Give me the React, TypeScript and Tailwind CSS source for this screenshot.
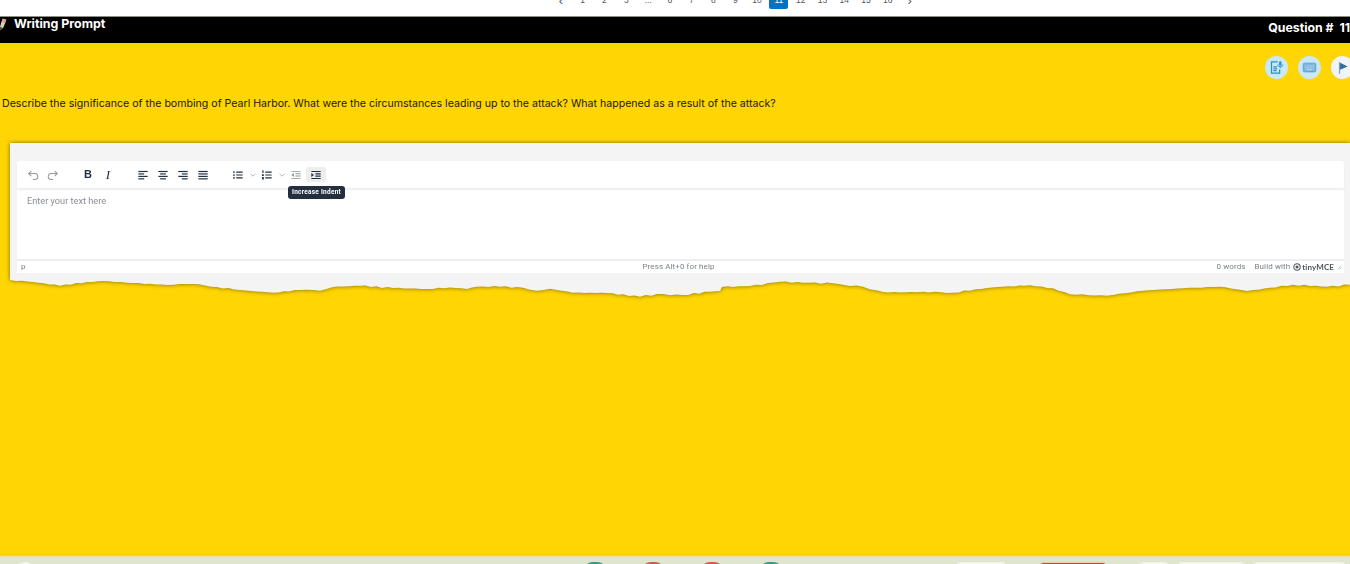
const pages = ["1", "2", "3", "...", "6", "7", "8", "9", "10", "11", "12", "13", "14", "15", "16"];

// outline of the torn paper, read off the picture in page pixels
const tornPoints: [number, number][] = [
  [10, 280], [33, 282], [60, 285.7], [87, 282], [103, 281], [133, 283], [167, 285], [193, 284], [217, 287],
  [240, 290], [273, 292.7], [300, 290], [320, 290.7], [333, 287], [360, 285.7], [393, 288], [427, 289], [450, 287.4],
  [467, 289], [477, 286.7], [500, 286.7], [523, 287.7], [537, 290.7], [550, 288.7], [573, 292.7], [607, 293],
  [640, 296.7], [657, 294], [683, 295], [710, 291.7], [720, 291], [722, 287], [750, 286], [780, 281.7], [803, 282.7],
  [833, 283.3], [850, 286], [863, 286.7], [883, 292], [900, 292.5], [923, 291.7], [953, 292.7], [987, 288], [1003, 286.7],
  [1030, 285.3], [1053, 288.3], [1070, 294.3], [1107, 295.7], [1143, 290.7], [1183, 288.3], [1220, 286.7], [1247, 291],
  [1293, 284.7], [1327, 286.7], [1350, 284.7],
];

function buildTornEdge() {
  const out: string[] = ["M0 0 L1340 0"];
  for (let i = tornPoints.length - 1; i > 0; i--) {
    const [x1, y1] = tornPoints[i];
    const [x0, y0] = tornPoints[i - 1];
    const steps = Math.max(1, Math.round((x1 - x0) / 6));
    for (let s = 0; s < steps; s++) {
      const t = s / steps;
      const x = x1 + (x0 - x1) * t;
      const y = y1 + (y0 - y1) * t;
      const noise = s === 0 ? 0 : Math.sin(x * 1.7) * 0.5 + Math.sin(x * 0.63) * 0.3;
      out.push(`L${(x - 10).toFixed(1)} ${Math.max(0, y - 280 + noise).toFixed(1)}`);
    }
  }
  out.push("L0 0 Z");
  return out.join(" ");
}

const tornEdge = buildTornEdge();

function Ico({ children, className = "" }: { children: React.ReactNode; className?: string }) {
  return (
    <svg viewBox="0 0 24 24" className={`w-[14px] h-[14px] ${className}`} fill="currentColor">
      {children}
    </svg>
  );
}

function ToolBtn({ children, active }: { children: React.ReactNode; active?: boolean }) {
  return (
    <span className={`flex items-center justify-center w-[20px] h-[15px] rounded-[2px] ${active ? "bg-[#eeeeee]" : ""}`}>
      {children}
    </span>
  );
}

function Chevron() {
  return (
    <span className="flex items-center justify-center w-[9px] h-[15px] text-[#7d858e]">
      <svg viewBox="0 0 10 6" className="w-[6px] h-[4px]" fill="none" stroke="currentColor" strokeWidth="1">
        <path d="M1 1l4 4 4-4" />
      </svg>
    </span>
  );
}

function Align({ rows }: { rows: [number, number][] }) {
  return (
    <Ico>
      {rows.map(([x, w], i) => (
        <rect key={i} x={x} y={5 + i * 4.2} width={w} height="2" />
      ))}
    </Ico>
  );
}

function Toolbar() {
  return (
    <div className="flex items-center h-[27px] pl-[6px] bg-white rounded-t-[4px] shadow-[0_2px_2px_rgba(0,0,0,0.07)] relative text-[#222f3e]">
      <ToolBtn>
        <Ico className="text-[#8f969e]">
          <path d="M8.5 4.5L3.5 9.5l5 5 1.2-1.2-2.9-2.9H15a4.3 4.3 0 0 1 0 8.6h-3v1.7h3a6 6 0 0 0 0-12H6.8l2.9-2.9z" />
        </Ico>
      </ToolBtn>
      <ToolBtn>
        <Ico className="text-[#8f969e]">
          <path d="M15.5 4.5l5 5-5 5-1.2-1.2 2.9-2.9H9a4.3 4.3 0 0 0 0 8.6h3v1.7H9a6 6 0 0 1 0-12h8.2l-2.9-2.9z" />
        </Ico>
      </ToolBtn>
      <span className="w-[15px]" />
      <ToolBtn>
        <span className="font-['Liberation_Sans',sans-serif] font-bold text-[11px] leading-none">B</span>
      </ToolBtn>
      <ToolBtn>
        <span className="font-['Liberation_Serif',serif] italic text-[13px] leading-none">I</span>
      </ToolBtn>
      <span className="w-[15px]" />
      <ToolBtn><Align rows={[[4, 16], [4, 10], [4, 16], [4, 10]]} /></ToolBtn>
      <ToolBtn><Align rows={[[4, 16], [7, 10], [4, 16], [7, 10]]} /></ToolBtn>
      <ToolBtn><Align rows={[[4, 16], [10, 10], [4, 16], [10, 10]]} /></ToolBtn>
      <ToolBtn><Align rows={[[4, 16], [4, 16], [4, 16], [4, 16]]} /></ToolBtn>
      <span className="w-[15px]" />
      <ToolBtn>
        <Ico>
          <path d="M9 6h11v2H9zM9 11h11v2H9zM9 16h11v2H9z" />
          <circle cx="5" cy="7" r="1.5" />
          <circle cx="5" cy="12" r="1.5" />
          <circle cx="5" cy="17" r="1.5" />
        </Ico>
      </ToolBtn>
      <Chevron />
      <ToolBtn>
        <Ico>
          <path d="M9 6h11v2H9zM9 11h11v2H9zM9 16h11v2H9z" />
          <path d="M4 4h2v4.5H4zM3.5 10.5h3v3h-3zM3.5 15.5h3v4h-3z" />
        </Ico>
      </ToolBtn>
      <Chevron />
      <ToolBtn>
        <Ico className="text-[#8f969e]">
          <path d="M4 5h16v1.6H4zM11 9h9v1.6h-9zM11 13h9v1.6h-9zM4 17.4h16V19H4z" />
          <path d="M8.5 8.5v7L4 12z" />
        </Ico>
      </ToolBtn>
      <ToolBtn active>
        <Ico>
          <path d="M4 5h16v2H4zM11 9h9v2h-9zM11 13h9v2h-9zM4 17h16v2H4z" />
          <path d="M4 8.5v7l4.5-3.5z" />
        </Ico>
      </ToolBtn>
      <div className="absolute left-[271px] top-[25px] h-[13px] px-[4px] flex items-center rounded-[3px] bg-[#222f3e] text-white font-['Roboto',sans-serif] font-bold text-[6.5px] tracking-[0.25px] whitespace-nowrap z-10">
        Increase Indent
      </div>
    </div>
  );
}

function StatusBar() {
  return (
    <div className="grid grid-cols-3 items-center h-[14px] mt-auto border-t-2 border-[#eeeeee] bg-white pl-[4px] pr-[2px] font-['Roboto',sans-serif] text-[8px] text-[#7c8288] tracking-[0.1px]">
      <span>p</span>
      <span className="text-center pr-[6px] whitespace-nowrap">Press Alt+0 for help</span>
      <span className="flex items-center justify-end gap-[9px] whitespace-nowrap">
        <span>0 words</span>
        <span className="flex items-center gap-[3px]">
          Build with
          <svg viewBox="0 0 12 12" className="w-[8px] h-[8px]" fill="none" stroke="#4f565c" strokeWidth="1.6">
            <circle cx="6" cy="6" r="4.8" />
            <rect x="4" y="4" width="4" height="4" fill="#4f565c" stroke="none" />
          </svg>
          <b className="-ml-[2px] font-['Lato',sans-serif] font-bold text-[#4f565c] text-[8px]">tinyMCE</b>
        </span>
        <svg viewBox="0 0 8 8" className="w-[5px] h-[5px] -ml-[6px]" stroke="#8b939c" strokeWidth="0.8">
          <path d="M7 1L1 7M7 4L4 7" />
        </svg>
      </span>
    </div>
  );
}

function RoundIcon({ children, light }: { children: React.ReactNode; light?: boolean }) {
  return (
    <span className={`flex shrink-0 items-center justify-center w-[23px] h-[23px] rounded-full ${light ? "bg-[#f0f4f6]" : "bg-[#c9e8f8]"}`}>
      {children}
    </span>
  );
}

export default function App() {
  return (
    <div className="flex flex-col w-[1350px] h-[564px] overflow-hidden bg-white font-['Inter',sans-serif]">
      {/* pagination, cut off by the top of the window */}
      <div className="h-[16px] overflow-hidden shrink-0">
        <div className="flex items-center h-[18px] -mt-[9px] pl-[550px] text-[8.5px] text-[#555a5f] font-['Liberation_Sans',sans-serif]">
          <span className="w-[21.8px] text-center text-[13px] leading-none">‹</span>
          {pages.map((p) => (
            <span key={p} className="flex justify-center w-[21.8px]">
              <span className={`flex items-center justify-center w-[19px] h-[18px] ${p === "11" ? "bg-[#0076c0] text-white rounded-[2px]" : ""}`}>
                {p}
              </span>
            </span>
          ))}
          <span className="w-[21.8px] text-center text-[13px] leading-none">›</span>
        </div>
      </div>

      <header className="flex items-start justify-between h-[27px] shrink-0 bg-black border-t border-[#8f8f80] text-white font-bold">
        <div className="flex items-start h-full">
          <svg viewBox="0 0 7 13" className="w-[7px] h-[13px] mt-[1px]">
            <path d="M2.5 0.5l4 1-1.2 3.5-3.8-1.2z" fill="#e8a09a" />
            <path d="M1.5 3.5l3.8 1.3-2.3 5.5-3-1.3z" fill="#d9d2c0" />
            <path d="M0 9l3 1.3-3 2.2z" fill="#6b5a3a" />
          </svg>
          <span className="ml-[7px] text-[12.4px] leading-[14px]">Writing Prompt</span>
        </div>
        <span className="mt-[4px] text-[12.3px] leading-[14px] whitespace-nowrap">Question #&nbsp; 11</span>
      </header>

      <main className="flex-1 min-h-0 bg-[#ffd503] flex flex-col overflow-hidden">
        <div className="flex justify-end items-center gap-[10px] pt-[13px] -mr-[4px] text-[#2f8fc4]">
          <RoundIcon>
            <svg viewBox="0 0 24 24" className="w-[15px] h-[15px]" fill="none" stroke="currentColor" strokeWidth="2">
              <path d="M14 3H4v18h13v-6" />
              <path d="M7 11h6M7 14h6M7 17h5" />
              <rect x="16" y="2" width="4" height="7" rx="2" fill="currentColor" stroke="none" />
              <path d="M14 7a4 4 0 0 0 8 0M18 11v2" strokeWidth="1.4" />
            </svg>
          </RoundIcon>
          <RoundIcon>
            <svg viewBox="0 0 24 24" className="w-[15px] h-[15px]">
              <rect x="2" y="5" width="20" height="14" rx="2" fill="#7fb6da" stroke="#4a97c6" strokeWidth="1.2" />
              <path d="M5 9.5h14M5 12.5h14" stroke="#c9e8f8" strokeWidth="1.3" strokeDasharray="1.5 1" />
              <path d="M7 15.5h10" stroke="#c9e8f8" strokeWidth="1.3" />
            </svg>
          </RoundIcon>
          <RoundIcon light>
            <svg viewBox="0 0 24 24" className="w-[14px] h-[14px]">
              <path d="M6 2v20" stroke="#8d99a0" strokeWidth="2" />
              <path d="M7 3l13 6.5L7 15z" fill="#2c6f9e" />
            </svg>
          </RoundIcon>
        </div>

        <p className="mt-[18px] pl-[2px] text-[10.6px] leading-[14px] text-[#1d1a05] whitespace-nowrap">
          Describe the significance of the bombing of Pearl Harbor. What were the circumstances leading up to the attack? What happened as a result of the attack?
        </p>

        <div className="mt-[32px] ml-[10px] drop-shadow-[0_0_2px_#7a6500]">
          <div className="flex flex-col h-[137px] pt-[18px] pl-[7px] pr-[6px] pb-[7px] bg-[#f4f4f4]">
            <div className="flex flex-col flex-1 bg-white rounded-t-[4px]">
              <Toolbar />
              <div className="pt-[7px] pl-[10px] font-['Roboto',sans-serif] text-[9.2px] leading-[12px] text-[#8a8f96]">
                Enter your text here
              </div>
              <StatusBar />
            </div>
          </div>
          <svg viewBox="0 0 1340 18" className="block w-[1340px] h-[18px]">
            <path d={tornEdge} fill="#f4f4f4" />
          </svg>
        </div>
      </main>

      <footer className="flex items-start h-[8px] shrink-0 overflow-hidden bg-[#e0e5cd] border-t border-[#ece39a] pt-[5px]">
        <span className="ml-[15px] w-[20px] h-[20px] rounded-full bg-[#f3f5ea]" />
        <span className="ml-[548px] w-[24px] h-[20px] rounded-full bg-[#2f9c8f]" />
        <span className="ml-[34px] w-[24px] h-[20px] rounded-full bg-[#d9584e]" />
        <span className="ml-[35px] w-[24px] h-[20px] rounded-full bg-[#d9584e]" />
        <span className="ml-[35px] w-[24px] h-[20px] rounded-full bg-[#2f9c8f]" />
        <span className="ml-[172px] w-[52px] h-[20px] rounded-md bg-[#f3f5ea]" />
        <span className="ml-[33px] w-[66px] h-[20px] rounded-sm bg-[#a9592c] border-t border-[#f2c8a0]" />
        <span className="ml-[32px] w-[32px] h-[20px] rounded-md bg-[#f3f5ea]" />
        <span className="ml-[7px] w-[69px] h-[20px] rounded-md bg-[#f3f5ea]" />
        <span className="ml-[6px] w-[95px] h-[20px] rounded-md bg-[#f3f5ea]" />
      </footer>
    </div>
  );
}
